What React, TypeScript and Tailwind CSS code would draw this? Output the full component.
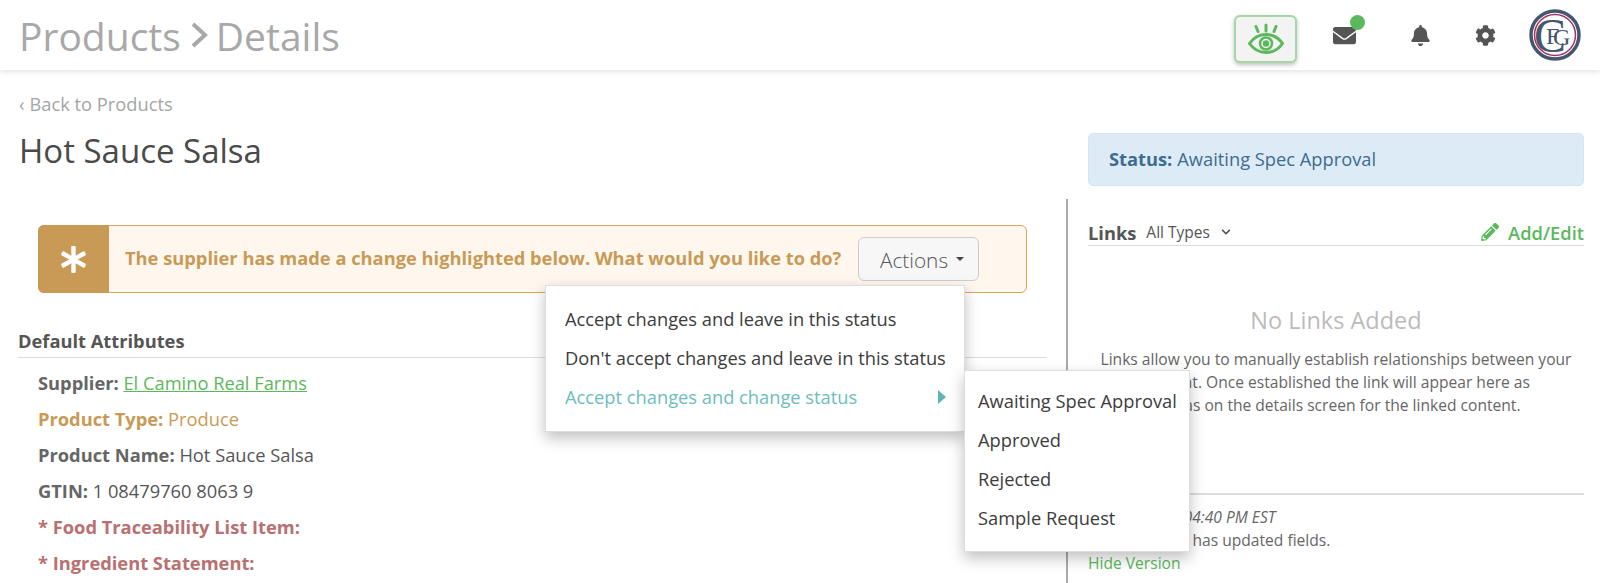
import { FaAsterisk, FaBell, FaChevronDown, FaCog, FaEnvelope, FaPencilAlt } from 'react-icons/fa';

const subStatuses = ['Awaiting Spec Approval', 'Approved', 'Rejected', 'Sample Request'];

function EyeIcon() {
  return (
    <svg width="38" height="32" viewBox="0 0 38 32" fill="none" stroke="#5cb85c" strokeLinecap="round">
      <path d="M2.5 20.500C7 14 12.500 11.500 19 11.500S31 14 35.500 20.500C31 27 25.500 29.500 19 29.500S7 27 2.500 20.500Z" strokeWidth="3" />
      <circle cx="19" cy="20.500" r="6" strokeWidth="2.500" />
      <circle cx="19" cy="20.500" r="3.200" fill="#5cb85c" stroke="none" />
      <path d="M19 2v6M9 3.500l2 5M29 3.500l-2 5" strokeWidth="3" />
    </svg>
  );
}

function Logo() {
  return (
    <svg width="52" height="52" viewBox="0 0 52 52" fontFamily="'Liberation Serif', serif">
      <circle cx="26" cy="26" r="24" fill="#fff" stroke="#46566e" strokeWidth="3.500" />
      <circle cx="26" cy="26" r="20.500" fill="none" stroke="#a0336b" strokeWidth="1.500" />
      <text fill="#46566e">
        <tspan x="5" y="43" fontSize="48">C</tspan>
        <tspan x="17" y="35" fontSize="24">F</tspan>
        <tspan x="24" y="36" fontSize="24">G</tspan>
      </text>
    </svg>
  );
}

function Attr({ label, children, className }: { label: string; children?: React.ReactNode; className: string }) {
  return (
    <div className={`h-[36px] leading-[36px] text-[18.3px] ${className}`}>
      <span className="font-bold">{label}</span> {children}
    </div>
  );
}

export default function App() {
  return (
    <div className="relative h-[583px] overflow-hidden bg-white font-['Open_Sans',sans-serif] text-[#555]">
      <header className="h-[70px] flex items-center justify-between pl-[19px] pr-[19px] shadow-[0_1px_6px_rgba(0,0,0,0.14)]">
        <div className="flex items-center text-[39px] text-[#a8a8a8] leading-none">
          <span>Products</span>
          <svg width="20" height="28" viewBox="0 0 20 28" fill="none" stroke="#a8a8a8" strokeWidth="4" className="ml-[9px] mr-[6px]">
            <path d="M3 3l12 11L3 25" />
          </svg>
          <span>Details</span>
        </div>
        <div className="flex items-center">
          <div className="w-[63px] h-[48px] mt-[8px] rounded-[6px] border-2 border-[#a5d6a5] bg-[#f3f3f3] shadow-[0_2px_4px_rgba(0,0,0,0.25)] flex items-center justify-center">
            <EyeIcon />
          </div>
          <div className="relative ml-[36px] w-[24px]">
            <FaEnvelope size={23} color="#555" />
            <span className="absolute -top-[9px] left-[17px] w-[15px] h-[15px] rounded-full bg-[#5cb85c]" />
          </div>
          <FaBell size={21} color="#555" className="ml-[53px]" />
          <FaCog size={21} color="#555" className="ml-[44px]" />
          <div className="ml-[33px]">
            <Logo />
          </div>
        </div>
      </header>

      <div className="flex">
        <div className="w-[1067px] shrink-0">
          <div className="pl-[18px] pt-[22px] h-[129px]">
            <div className="text-[18.3px] leading-[24px] text-[#a5a5a5] flex">
              <span className="ml-[1px] mr-[5px]">‹</span>
              <span>Back to Products</span>
            </div>
            <h1 className="text-[33px] leading-[40px] mt-[15px] text-[#4a4a4a] pl-[1px]">Hot Sauce Salsa</h1>
          </div>
          <div className="ml-[38px] mr-[40px] mt-[26px] h-[68px] flex rounded-[6px] border border-[#d9a65c] bg-[#fff7ee]">
            <div className="w-[71px] -ml-px -my-px rounded-l-[6px] bg-[#c89a56] flex items-center justify-center">
              <FaAsterisk size={27} color="#fff" />
            </div>
            <div className="flex-1 flex items-center pl-[16px] pr-[47px] justify-between">
              <span className="text-[18.3px] font-bold text-[#c89a56] -mt-[2px] whitespace-nowrap">The supplier has made a change highlighted below. What would you like to do?</span>
              <div className="w-[121px] h-[44px] shrink-0 rounded-[6px] border border-[#ccc] bg-[#f7f7f7] flex items-center justify-center pl-[7px] gap-[8px] text-[20.800px] font-light text-[#555]">
                <span className="mt-[3px]">Actions</span>
                <span className="w-0 h-0 border-x-[4px] border-x-transparent border-t-[4px] border-t-[#444]" />
              </div>
            </div>
          </div>
          <div className="ml-[18px] mr-[20px] mt-[35px] h-[30px] border-b border-[#ddd] text-[18.3px] font-bold leading-[26px]">Default Attributes</div>
          <div className="pl-[38px] pt-[7px]">
            <Attr label="Supplier:" className="text-[#666]">
              <span className="font-normal text-[#5cb85c] underline">El Camino Real Farms</span>
            </Attr>
            <Attr label="Product Type:" className="text-[#c89a56]">Produce</Attr>
            <Attr label="Product Name:" className="text-[#666]">
              <span className="text-[#555]">Hot Sauce Salsa</span>
            </Attr>
            <Attr label="GTIN:" className="text-[#666]">
              <span className="text-[#555]">1 08479760 8063 9</span>
            </Attr>
            <Attr label="* Food Traceability List Item:" className="text-[#b87070]" />
            <Attr label="* Ingredient Statement:" className="text-[#b87070]" />
          </div>
        </div>

        <div className="flex-1 pl-[21px] pr-[16px] pt-[63px]">
          <div className="h-[53px] rounded-[5px] border border-[#d3e6f1] bg-[#dcebf6] flex items-center pl-[20px] pb-[1px] text-[18.3px] text-[#3f6c8f]">
            <span className="font-bold mr-[5px]">Status:</span> Awaiting Spec Approval
          </div>
        </div>
      </div>

      <div className="absolute left-[1066px] top-[199px] bottom-0 w-[2px] bg-[#aaa]" />

      <div className="absolute left-[1088px] top-[199px] w-[496px]">
        <div className="h-[47px] flex items-end justify-between border-b border-[#ddd]">
          <div className="flex items-center -mb-[1px]">
            <span className="text-[18.3px] font-bold">Links</span>
            <span className="ml-[10px] text-[15.500px]">All Types</span>
            <FaChevronDown size={10} className="ml-[11px]" />
          </div>
          <div className="flex items-center -mb-[1px] text-[18.3px] font-semibold text-[#5cb85c]">
            <FaPencilAlt size={18} className="mr-[9px]" />
            Add/Edit
          </div>
        </div>
        <div className="mt-[58px] text-center text-[23.500px] leading-[32px] text-[#bbb]">No Links Added</div>
        <p className="mt-[12px] text-center text-[15.6px] leading-[23px] text-[#666]">
          Links allow you to manually establish relationships between your
          <br />
          content. Once established the link will appear here as
          <br />
          well as on the details screen for the linked content.
        </p>
        <div className="mt-[76px] border-t-2 border-[#ddd] pt-[11px] text-[15.6px] leading-[23px] text-[#666]">
          <div className="italic">Mar 15, 2024 04:40 PM EST</div>
          <div>This company has updated fields.</div>
          <div className="text-[#5cb85c]">Hide Version</div>
        </div>
      </div>

      <div className="absolute left-[545px] top-[285px] w-[420px] h-[147px] bg-white border border-[#ddd] shadow-[0_6px_14px_rgba(0,0,0,0.25)] pl-[19px] pt-[13px] text-[18.3px] leading-[39px] text-[#3c3c3c]">
        <div>Accept changes and leave in this status</div>
        <div>Don't accept changes and leave in this status</div>
        <div className="flex items-center text-[#6cbdbd]">
          Accept changes and change status
          <span className="ml-[81px] w-0 h-0 border-y-[7px] border-y-transparent border-l-[8px] border-l-[#5fb5b5]" />
        </div>
      </div>

      <div className="absolute left-[964px] top-[370px] w-[226px] h-[182px] bg-white border border-[#ddd] shadow-[0_6px_14px_rgba(0,0,0,0.25)] pl-[13px] pt-[10px] text-[18.3px] leading-[39px] text-[#3c3c3c]">
        {subStatuses.map((s) => (
          <div key={s}>{s}</div>
        ))}
      </div>
    </div>
  );
}
